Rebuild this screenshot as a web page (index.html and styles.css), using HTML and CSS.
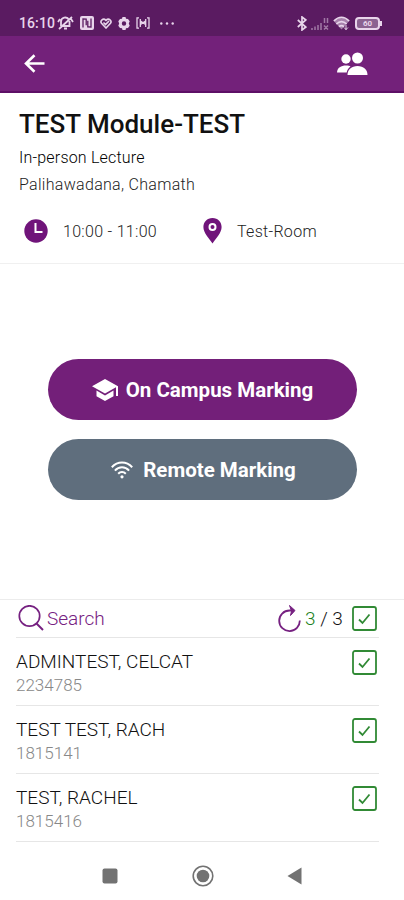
FILE: index.html
```html
<!DOCTYPE html>
<html lang="en">

<head>
    <meta charset="utf-8">
    <title>Attendance</title>
    <link rel="stylesheet" href="styles.css">
</head>

<body>
    <div class="status-bar">
        <div class="status-left">
            <span class="clock">16:10</span>
            <!-- muted bell -->
            <svg width="17" height="14" viewBox="0 0 17 14" fill="none" stroke="currentColor" stroke-width="1.800">
                <path d="M4 10V6a4.200 4.200 0 0 1 8-2M12.500 5v5H5M7 12.500h3M2 13 15 1M1 6l2-3M16 6l-2-3" />
            </svg>
            <svg width="14" height="14" viewBox="0 0 14 14">
                <rect width="14" height="14" rx="2" fill="currentColor" />
                <path d="M3 11.500V3l3.200.2v6M11 2.500V11l-3.200-.2v-6" fill="none" stroke="#5a1b61" stroke-width="1.300" />
            </svg>
            <svg width="12" height="11" viewBox="0 0 12 11" fill="none" stroke="currentColor" stroke-width="1.600">
                <path d="M6 10 1.500 5.300C-.2 3 3-.5 6 2.300 9-.5 12.200 3 10.500 5.300ZM3.500 4.500 5.500 6.500 9 3" />
            </svg>
            <svg width="12" height="13" viewBox="0 0 12 13">
                <path fill="currentColor" fill-rule="evenodd" d="m4.500 0h3l.5 1.700 2 .2 1.700 2.400-.9 2.200.9 2.200-1.700 2.400-2 .2-.5 1.700h-3L4 11.300l-2-.2L.3 8.700l.9-2.200L.3 4.300 2 1.900l2-.2ZM6 4.300a2.200 2.200 0 1 0 0 4.400 2.200 2.200 0 0 0 0-4.400Z" />
            </svg>
            <svg width="14" height="12" viewBox="0 0 14 12" fill="none" stroke="currentColor" stroke-width="1.300">
                <path d="M3 .8H1v10.400h2M11 .8h2v10.400h-2M4.300 2v8M9.700 2v8M4.500 4l5 3.500M4.500 7.500l5-3.500" />
            </svg>
            <svg class="dots" width="14" height="3" viewBox="0 0 14 3" fill="currentColor">
                <circle cx="1.300" cy="1.500" r="1.200" />
                <circle cx="7" cy="1.500" r="1.200" />
                <circle cx="12.700" cy="1.500" r="1.200" />
            </svg>
        </div>
        <div class="status-right">
            <svg width="10" height="15" viewBox="0 0 10 15" fill="none" stroke="currentColor" stroke-width="1.700">
                <path d="m.8 4 8 7L5 14V1l3.800 3-8 7" />
            </svg>
            <svg width="18" height="13" viewBox="0 0 18 13" fill="none" stroke="currentColor" stroke-width="1.500" opacity=".5">
                <path d="M1 13v-2M4 13V9.500M7 13V8M10 13V6M13.500 1v5M16.500 1v5M13 8.500l4 4M17 8.500l-4 4" />
            </svg>
            <svg width="17" height="14" viewBox="0 0 17 14">
                <path d="M.8 5Q8.500-2.500 16.200 5L8.500 13.500Z" fill="currentColor" opacity=".55" />
                <path d="M.8 5Q8.500-2.500 16.200 5M3.300 8q5.200-4.600 10.400 0M6 10.700q2.500-2.200 5 0" fill="none" stroke="currentColor" stroke-width="1.600" />
                <path d="M13 9v5M11 11.500l2 2 2-2" fill="none" stroke="currentColor" />
            </svg>
            <span class="battery">60</span>
        </div>
    </div>

    <header class="app-bar">
        <svg width="21" height="19" viewBox="0 0 21 19" fill="none" stroke="currentColor" stroke-width="2.600">
            <path d="M10.500 1.200 2 9.500l8.500 8.300M2.200 9.500H20.500" />
        </svg>
        <svg width="31" height="24" viewBox="0 0 31 24" fill="currentColor">
            <circle cx="9" cy="7" r="4.700" />
            <path d="M0 20.500c.4-5 4-7 9-7 2.200 0 3.500.4 4.500 1-2.200 1.600-3.400 3.500-3.800 6Z" />
            <circle cx="20.500" cy="6" r="5.500" />
            <path d="M10.500 23c0-5.500 4-9 10-9s10 3.500 10 9Z" />
        </svg>
    </header>

    <section class="module">
        <h1>TEST Module-TEST</h1>
        <p class="type">In-person Lecture</p>
        <p class="teacher">Palihawadana, Chamath</p>
        <div class="info">
            <svg width="24" height="24" viewBox="0 0 24 24">
                <circle cx="12" cy="12" r="11.700" fill="#70147a" />
                <path d="M11.500 4v9h7" fill="none" stroke="#fff" stroke-width="2" />
            </svg>
            <span class="time">10:00 - 11:00</span>
            <svg width="19" height="26" viewBox="0 0 19 26">
                <path d="M9.500 0C4 0 .4 4 .4 9c0 6 5.600 11 9.100 16.500C13 20 18.600 15 18.600 9c0-5-3.600-9-9.100-9Z" fill="#70147a" />
                <circle cx="9.500" cy="9" r="3" fill="none" stroke="#fff" stroke-width="2" />
            </svg>
            <span class="room">Test-Room</span>
        </div>
    </section>

    <main class="actions">
        <button class="btn campus">
            <svg width="27" height="23" viewBox="0 0 27 23" fill="currentColor">
                <path d="M13 0 0 7.200 13 14.500 24 8.200V17h2V7.200Z" />
                <path d="M4.500 11.500v5.800L13 22l8.500-4.700v-5.800L13 16.500Z" />
            </svg>
            <span>On Campus Marking</span>
        </button>
        <button class="btn remote">
            <svg width="22" height="18" viewBox="0 0 22 18" fill="none" stroke="currentColor" stroke-width="2">
                <path d="M.8 6.200C6.600-.1 15.400-.1 21.200 6.200M3.900 9.600c4-4.400 10.200-4.400 14.200 0M7.200 12.800c2.200-2.400 5.400-2.400 7.600 0" />
                <circle cx="11" cy="15.800" r="1.600" fill="currentColor" stroke="none" />
            </svg>
            <span>Remote Marking</span>
        </button>
    </main>

    <section class="students">
        <div class="search">
            <svg width="26" height="26" viewBox="0 0 26 26" fill="none" stroke="currentColor" stroke-width="1.700">
                <circle cx="11.500" cy="11" r="10.200" />
                <path d="m18.500 18.500 6.500 6.500" stroke-width="2" />
            </svg>
            <span class="label">Search</span>
            <svg class="refresh" width="23" height="27" viewBox="0 0 23 27" fill="none" stroke="currentColor" stroke-width="1.800">
                <path d="M21.800 15.500A10.300 10.300 0 1 1 11.500 5.500H16" />
                <path d="m11.500.5 5.500 5-4.500 5 1-4.500Z" fill="currentColor" stroke-width="1" />
            </svg>
            <span class="count"><b>3</b> / 3</span>
            <svg class="check" viewBox="0 0 25 25"><rect x="1" y="1" width="23" height="23" rx="2" /><path d="m7 13.500 3.500 3.500 7-8.500" /></svg>
        </div>
        <div class="student">
            <div>
                <div class="name">ADMINTEST, CELCAT</div>
                <div class="number">2234785</div>
            </div>
            <svg class="check" viewBox="0 0 25 25"><rect x="1" y="1" width="23" height="23" rx="2" /><path d="m7 13.500 3.500 3.500 7-8.500" /></svg>
        </div>
        <div class="student">
            <div>
                <div class="name">TEST TEST, RACH</div>
                <div class="number">1815141</div>
            </div>
            <svg class="check" viewBox="0 0 25 25"><rect x="1" y="1" width="23" height="23" rx="2" /><path d="m7 13.500 3.500 3.500 7-8.500" /></svg>
        </div>
        <div class="student">
            <div>
                <div class="name">TEST, RACHEL</div>
                <div class="number">1815416</div>
            </div>
            <svg class="check" viewBox="0 0 25 25"><rect x="1" y="1" width="23" height="23" rx="2" /><path d="m7 13.500 3.500 3.500 7-8.500" /></svg>
        </div>
    </section>

    <nav class="nav-bar">
        <svg width="16" height="16" viewBox="0 0 16 16"><rect x=".5" y=".5" width="15" height="15" rx="2" fill="#727272" /></svg>
        <svg width="22" height="22" viewBox="0 0 22 22">
            <circle cx="11" cy="11" r="9.800" fill="none" stroke="#727272" stroke-width="1.600" />
            <circle cx="11" cy="11" r="6.300" fill="#727272" />
        </svg>
        <svg width="15" height="18" viewBox="0 0 15 18"><path d="M14.500.5v17L.5 9Z" fill="#727272" /></svg>
    </nav>
</body>

</html>
```

FILE: styles.css
```css
* {
    box-sizing: border-box;
}

body {
    margin: 0;
    height: 900px;
    background: #fff;
    font-family: Roboto, sans-serif;
    overflow: hidden;
}

svg {
    display: block;
    flex: none;
}

.status-bar {
    display: flex;
    justify-content: space-between;
    height: 36px;
    padding: 10px 21px 0 19px;
    background: #5a1b61;
    color: #e8d5eb;
}

.status-left,
.status-right {
    display: flex;
    align-items: center;
    height: 26px;
}

.status-left {
    gap: 6px;
}

.clock {
    width: 35px;
    margin-right: -3px;
    font-size: 14px;
    font-weight: 500;
    letter-spacing: 0.100px;
}

.dots {
    margin-left: 4px;
}

.status-right {
    gap: 4px;
}

.battery {
    position: relative;
    flex: none;
    width: 25px;
    height: 13px;
    margin-left: 1px;
    margin-right: 3px;
    border: 2px solid #e8d5eb;
    border-radius: 4px;
    background: #8b6291;
    font-size: 8px;
    font-weight: 700;
    line-height: 9px;
    text-align: center;
}

.battery::after {
    content: "";
    position: absolute;
    top: 2px;
    right: -4px;
    width: 2px;
    height: 5px;
    background: #e8d5eb;
}

.app-bar {
    display: flex;
    align-items: center;
    justify-content: space-between;
    height: 57px;
    padding: 0 36px 0 24px;
    background: #73217a;
    border-bottom: 2px solid #5d0f66;
    color: #fff;
}

.module {
    height: 171px;
    padding: 14px 19px 0;
    border-bottom: 1px solid #f0f0f0;
}

h1 {
    margin: 0;
    color: #111;
    font-size: 26px;
    font-weight: 500;
    line-height: 34px;
}

.module p {
    margin: 0;
    font-size: 16px;
    font-weight: 300;
    line-height: 27px;
    letter-spacing: 0.300px;
}

.module .type {
    margin-top: 3px;
    color: #000;
    letter-spacing: 0.200px;
}

.module .teacher {
    color: #222;
}

.info {
    display: flex;
    align-items: center;
    height: 26px;
    margin-top: 20px;
    padding-left: 5px;
    color: #222;
    font-size: 16px;
    font-weight: 300;
    letter-spacing: 0.300px;
}

.time {
    width: 155px;
    padding-left: 15px;
}

.room {
    padding-left: 15px;
}

.actions {
    display: flex;
    flex-direction: column;
    justify-content: center;
    gap: 19px;
    height: 335px;
    padding: 0 47px 5px 48px;
}

.btn {
    display: flex;
    align-items: center;
    justify-content: center;
    height: 61px;
    padding: 2px 0 0;
    border: 0;
    border-radius: 31px;
    color: #fff;
    font-family: inherit;
    font-size: 20.500px;
    font-weight: 700;
}

.campus {
    gap: 7px;
    background: #731f79;
}

.remote {
    gap: 10px;
    padding-left: 2px;
    background: #5f6e7d;
}

.students {
    padding: 0 25px 0 16px;
    border-top: 1px solid #ececec;
}

.search {
    display: flex;
    align-items: center;
    height: 38px;
    padding: 0 2px 1px;
    border-bottom: 1px solid #e6e6e6;
    color: #762181;
    font-size: 19px;
}

.label {
    margin-left: 3px;
    font-weight: 300;
}

.refresh {
    margin-left: auto;
}

.count {
    width: 38px;
    margin: 0 9px 0 4px;
    color: #111;
    font-weight: 300;
    white-space: nowrap;
}

.count b {
    color: #1b7f20;
    font-weight: 300;
}

.check {
    width: 25px;
    height: 25px;
    fill: none;
    stroke: #318a35;
    stroke-width: 1.800;
}

.student {
    display: flex;
    justify-content: space-between;
    height: 68px;
    padding: 12px 2px 0 0;
    border-bottom: 1px solid #e6e6e6;
}

.name {
    color: #111;
    font-size: 19px;
    font-weight: 300;
    line-height: 24px;
}

.number {
    color: #888;
    font-size: 17px;
    font-weight: 300;
    line-height: 23px;
}

.nav-bar {
    display: flex;
    align-items: center;
    justify-content: space-between;
    height: 58px;
    padding: 10px 102px 0;
}
```
